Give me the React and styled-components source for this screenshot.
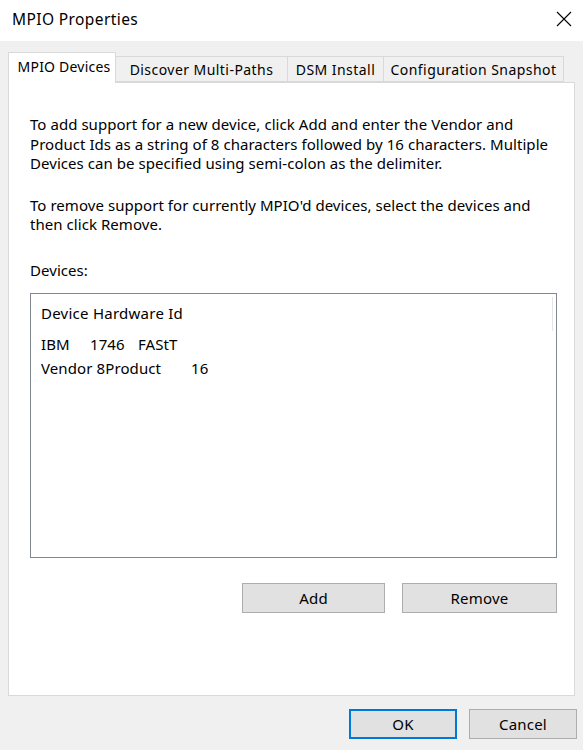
import React from 'react';
import styled, { createGlobalStyle } from 'styled-components';

const GlobalStyle = createGlobalStyle`
  html, body { margin: 0; padding: 0; background: #f0f0f0; }
  body { font-family: "Noto Sans", "DejaVu Sans", sans-serif; color: #000; }
  * { box-sizing: border-box; }
`;

const Window = styled.div`
  width: 583px;
  height: 750px;
  display: flex;
  flex-direction: column;
  background: #f0f0f0;
  overflow: hidden;
`;

const TitleBar = styled.div`
  height: 41px;
  flex: none;
  background: #fff;
  display: flex;
  align-items: center;
  justify-content: space-between;
  padding: 0 10px 3px 12px;
`;

const Title = styled.div`
  font-size: 15.5px;
  letter-spacing: 0.4px;
`;

const CloseButton = styled.button`
  width: 18px;
  height: 18px;
  padding: 0;
  border: none;
  background: transparent;
  display: flex;
  align-items: center;
  justify-content: center;
`;

const Body = styled.div`
  flex: 1;
  display: flex;
  flex-direction: column;
  padding: 11px 6px 0 8px;
`;

const TabStrip = styled.div`
  display: flex;
  align-items: flex-end;
  height: 30px;
  position: relative;
  z-index: 1;
`;

const Tab = styled.div`
  width: ${p => p.$w}px;
  height: ${p => (p.$active ? 31 : 26)}px;
  display: flex;
  align-items: center;
  justify-content: center;
  padding-left: ${p => (p.$active ? 4 : 0)}px;
  padding-bottom: ${p => (p.$active ? 3 : 0)}px;
  font-size: 14px;
  letter-spacing: ${p => (p.$active ? 0.2 : 0.45)}px;
  white-space: nowrap;
  background: ${p => (p.$active ? '#fff' : '#f0f0f0')};
  border: 1px solid #d9d9d9;
  border-bottom: ${p => (p.$active ? 'none' : '1px solid #d9d9d9')};
  margin-left: ${p => (p.$first ? 0 : -1)}px;
  margin-bottom: ${p => (p.$active ? -1 : 0)}px;
`;

const Panel = styled.div`
  width: 567px;
  height: 614px;
  background: #fff;
  border: 1px solid #d9d9d9;
  padding: 32px 17px 0 21px;
  display: flex;
  flex-direction: column;
`;

const Paragraph = styled.p`
  margin: 0 0 ${p => p.$gap || 0}px 0;
  font-size: 15px;
  letter-spacing: 0.05px;
  line-height: 19.5px;
  white-space: nowrap;
`;

const ListBox = styled.div`
  margin-top: 13px;
  width: 527px;
  height: 265px;
  border: 1px solid #828790;
  position: relative;
  padding: 5px 0 0 10px;
`;

const HeaderRow = styled.div`
  height: 30px;
  display: flex;
  align-items: center;
  font-size: 15px;
  letter-spacing: 0.25px;
  padding-bottom: 2px;
`;

const HeaderDivider = styled.div`
  position: absolute;
  right: 3px;
  top: 3px;
  width: 1px;
  height: 34px;
  background: #e5e5e5;
`;

const Row = styled.div`
  height: 24px;
  display: flex;
  align-items: center;
  font-size: 15px;
  letter-spacing: 0.1px;
  margin-top: ${p => p.$mt || 0}px;
`;

const Cell = styled.span`
  display: inline-block;
  width: ${p => (p.$w ? `${p.$w}px` : 'auto')};
  white-space: pre;
`;

const ButtonRow = styled.div`
  display: flex;
  justify-content: flex-end;
  gap: ${p => p.$gap}px;
  margin-top: ${p => p.$mt}px;
`;

const Button = styled.button`
  width: ${p => p.$w}px;
  height: 30px;
  background: #e1e1e1;
  border: ${p => (p.$default ? '2px solid #0078d7' : '1px solid #adadad')};
  font-family: inherit;
  font-size: 15px;
  letter-spacing: 0.2px;
  color: #000;
  padding: 0;
`;

export default function App() {
  return (
    <>
      <GlobalStyle />
      <Window>
        <TitleBar>
          <Title>MPIO Properties</Title>
          <CloseButton aria-label="Close">
            <svg width="16" height="16" viewBox="0 0 16 16">
              <path d="M1 1 L15 15 M15 1 L1 15" stroke="#000" strokeWidth="1.1" fill="none" />
            </svg>
          </CloseButton>
        </TitleBar>
        <Body>
          <TabStrip>
            <Tab $w={108} $active $first>MPIO Devices</Tab>
            <Tab $w={173}>Discover Multi-Paths</Tab>
            <Tab $w={97}>DSM Install</Tab>
            <Tab $w={181}>Configuration Snapshot</Tab>
          </TabStrip>
          <Panel>
            <Paragraph $gap={22}>
              To add support for a new device, click Add and enter the Vendor and
              <br />
              Product Ids as a string of 8 characters followed by 16 characters. Multiple
              <br />
              Devices can be specified using semi-colon as the delimiter.
            </Paragraph>
            <Paragraph $gap={26}>
              To remove support for currently MPIO'd devices, select the devices and
              <br />
              then click Remove.
            </Paragraph>
            <Paragraph>Devices:</Paragraph>
            <ListBox>
              <HeaderRow>Device Hardware Id</HeaderRow>
              <HeaderDivider />
              <Row $mt={3}>
                <Cell $w={49}>IBM</Cell>
                <Cell $w={48}>1746</Cell>
                <Cell>FAStT</Cell>
              </Row>
              <Row>
                <Cell $w={150}>Vendor 8Product</Cell>
                <Cell>16</Cell>
              </Row>
            </ListBox>
            <ButtonRow $gap={17} $mt={25}>
              <Button $w={143}>Add</Button>
              <Button $w={155}>Remove</Button>
            </ButtonRow>
          </Panel>
          <ButtonRow $gap={12} $mt={13}>
            <Button $w={108} $default>OK</Button>
            <Button $w={108}>Cancel</Button>
          </ButtonRow>
        </Body>
      </Window>
    </>
  );
}
